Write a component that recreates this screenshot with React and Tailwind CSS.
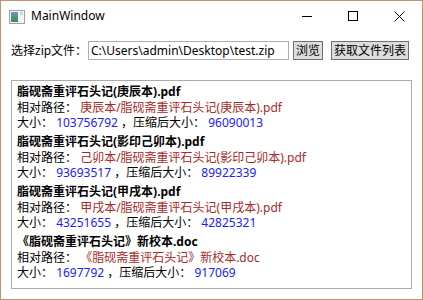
import React from 'react';

const FILES = [
  { name: '脂砚斋重评石头记(庚辰本).pdf', path: '庚辰本/脂砚斋重评石头记(庚辰本).pdf', size: '103756792', zipped: '96090013' },
  { name: '脂砚斋重评石头记(影印己卯本).pdf', path: '己卯本/脂砚斋重评石头记(影印己卯本).pdf', size: '93693517', zipped: '89922339' },
  { name: '脂砚斋重评石头记(甲戌本).pdf', path: '甲戌本/脂砚斋重评石头记(甲戌本).pdf', size: '43251655', zipped: '42825321' },
  { name: '《脂砚斋重评石头记》新校本.doc', path: '《脂砚斋重评石头记》新校本.doc', size: '1697792', zipped: '917069' },
];

const font = { fontFamily: '"Noto Sans", "Noto Sans CJK SC", sans-serif' };

function WindowIcon() {
  return (
    <svg width="16" height="14" viewBox="0 0 16 14">
      <rect x="0.5" y="0.5" width="15" height="13" fill="#f4f4f4" stroke="#a0a0a0" />
      <defs>
        <linearGradient id="g" x1="0" y1="0" x2="0" y2="1">
          <stop offset="0" stopColor="#6f9ab5" />
          <stop offset="1" stopColor="#3e8a4e" />
        </linearGradient>
      </defs>
      <rect x="2" y="2" width="7" height="10" fill="url(#g)" />
      <rect x="11" y="2" width="3" height="3" fill="#c9d7e2" />
    </svg>
  );
}

export default function App() {
  return (
    <div
      className="w-[423px] h-[300px] bg-white border border-[#c4906e] flex flex-col text-[12px] text-black overflow-hidden"
      style={font}
    >
      {/* 标题栏 */}
      <div className="h-[30px] flex items-center shrink-0">
        <div className="ml-[8px] mt-[1px]">
          <WindowIcon />
        </div>
        <span className="ml-[6px] text-[12px]">MainWindow</span>
        <div className="ml-auto flex h-full">
          <div className="w-[46px] flex items-center justify-center">
            <div className="w-[10px] h-px bg-black" />
          </div>
          <div className="w-[46px] flex items-center justify-center">
            <div className="w-[10px] h-[10px] border border-black" />
          </div>
          <div className="w-[46px] flex items-center justify-center">
            <svg width="11" height="11" viewBox="0 0 11 11">
              <path d="M0.5 0.5 L10.5 10.5 M10.5 0.5 L0.5 10.5" stroke="#000" strokeWidth="1" />
            </svg>
          </div>
        </div>
      </div>

      <div className="flex-1 flex flex-col px-[10px] pt-[10px] pb-[10px]">
        <div className="flex items-center h-[19px] shrink-0">
          <span className="w-[77px] leading-[19px]">选择zip文件：</span>
          <div className="w-[201px] h-[19px] border border-[#abadb3] flex items-center pl-[2px] leading-none">
            C:\Users\admin\Desktop\test.zip
          </div>
          <button className="ml-[4px] h-[19px] px-[2px] bg-[#dddddd] border border-[#707070] leading-none">
            浏览
          </button>
          <button className="ml-[8px] h-[19px] px-[2px] bg-[#dddddd] border border-[#707070] leading-none">
            获取文件列表
          </button>
        </div>

        <div className="mt-[20px] flex-1 border border-[#ababab] px-[5px] pt-[3px]">
          {FILES.map((f) => (
            <div key={f.name} className="mb-[3px]">
              <div className="h-[16px] leading-[16px] font-bold">{f.name}</div>
              <div className="h-[15px] leading-[15px]">
                相对路径：<span className="text-[#a52a2a]"> {f.path}</span>
              </div>
              <div className="h-[16px] leading-[16px]">
                大小：<span className="text-[#2020ff]"> {f.size} </span>，压缩后大小：
                <span className="text-[#2020ff]"> {f.zipped}</span>
              </div>
            </div>
          ))}
        </div>
      </div>
    </div>
  );
}
